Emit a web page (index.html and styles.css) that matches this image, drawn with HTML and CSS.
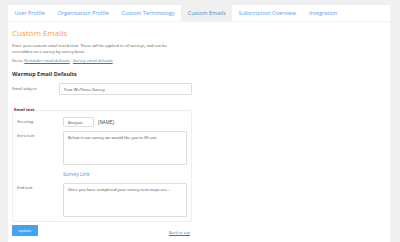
FILE: index.html
```html
<!DOCTYPE html>
<html lang="en">
<head>
  <meta charset="UTF-8">
  <title>Custom Emails</title>
  <link rel="stylesheet" href="styles.css">
</head>
<body>

<div class="panel">
  <ul class="tabs">
    <li><a href="#">User Profile</a></li>
    <li><a href="#">Organisation Profile</a></li>
    <li><a href="#">Custom Terminology</a></li>
    <li class="active"><a href="#">Custom Emails</a></li>
    <li><a href="#">Subscription Overview</a></li>
    <li><a href="#">Integration</a></li>
  </ul>

  <div class="content">
    <h1>Custom Emails</h1>
    <p class="intro">Enter your custom email text below. These will be applied to all surveys, and can be overridden on a survey by survey basis.</p>
    <p class="goto">Go to: <a href="#">Reminder email defaults</a> <a href="#">Survey email defaults</a></p>

    <h2>Warmup Email Defaults</h2>

    <div class="field">
      <label>Email subject</label>
      <input type="text" class="subject" value="Your WeThrive Survey">
    </div>

    <fieldset>
      <legend>Email text</legend>
      <div class="field">
        <label>Greeting</label>
        <input type="text" class="greet" value="Bonjour">
        <span class="name">[NAME],</span>
      </div>
      <div class="field">
        <label>Intro text</label>
        <textarea>Below is our survey we would like you to fill out:</textarea>
      </div>
      <div class="field link-row">
        <label></label>
        <a href="#" class="survey-link">Survey Link</a>
      </div>
      <div class="field">
        <label>End text</label>
        <textarea>Once you have completed your survey next steps are...</textarea>
      </div>
    </fieldset>

    <div class="actions">
      <button>update</button>
      <a href="#">Back to top</a>
    </div>
  </div>
</div>

</body>
</html>
```

FILE: styles.css
```css
body {
  margin: 0;
  padding: 5px 10px 0 8px;
  background-color: #f0f0f0;
  font-family: 'Open Sans', sans-serif;
  color: #444;
}
.panel {
  background-color: #fff;
  height: 237px;
}
.tabs {
  display: flex;
  margin: 0;
  padding: 0;
  list-style: none;
  border-bottom: 1px solid #f2f2f2;
}
.tabs li a {
  display: block;
  padding: 0 6.5px;
  line-height: 16px;
  font-size: 5.5px;
  color: #5aa0e8;
  text-decoration: none;
}
.tabs li.active a {
  background-color: #f0f0f0;
  color: #4a88c8;
}
.content {
  padding: 0 4px;
  width: 180px;
}
h1 {
  margin: 4px 0 0;
  font-size: 8px;
  font-weight: 400;
  line-height: 14px;
  color: #f5a04c;
}
.intro {
  margin: 3px 0 0;
  max-width: 164px;
  font-size: 4px;
  line-height: 6px;
  color: #555;
}
.goto {
  margin: 3px 0 0;
  font-size: 4px;
  line-height: 6px;
  color: #555;
}
.goto a {
  color: #2f80a8;
  margin-right: 2px;
}
h2 {
  margin: 6px 0 0;
  font-size: 5.5px;
  font-weight: 700;
  line-height: 8px;
  color: #333;
}
.field {
  display: flex;
  align-items: flex-start;
  margin-top: 5px;
}
.field label {
  width: 47px;
  flex: none;
  font-size: 4px;
  line-height: 12px;
  color: #555;
}
input, textarea {
  box-sizing: border-box;
  border: 1px solid #ddd;
  border-radius: 1px;
  font-family: 'Open Sans', sans-serif;
  font-size: 4px;
  color: #444;
  padding: 0 4px;
  margin: 0;
}
input.subject {
  width: 133px;
  height: 12px;
}
fieldset {
  margin: 12px 0 0;
  padding: 0 4px 4px;
  border: 1px solid #eee;
  border-radius: 1px;
}
legend {
  padding: 0 1px;
  margin-left: -4px;
  font-size: 4px;
  font-weight: 700;
  line-height: 6px;
  color: #333;
}
fieldset .field {
  margin-top: 4px;
}
fieldset .field label {
  width: 46px;
  line-height: 10px;
}
input.greet {
  width: 31px;
  height: 10px;
}
.name {
  margin-left: 4px;
  font-size: 4.5px;
  line-height: 10px;
}
textarea {
  width: 124px;
  height: 34px;
  padding: 3px 4px;
  resize: none;
  line-height: 5px;
}
fieldset .link-row {
  margin-top: 4px;
}
.survey-link {
  font-size: 5px;
  line-height: 10px;
  color: #4a90e2;
  text-decoration: none;
}
.actions {
  display: flex;
  justify-content: space-between;
  align-items: flex-end;
  margin-top: 3px;
}
button {
  width: 26px;
  height: 11px;
  padding: 0;
  border: none;
  border-radius: 1px;
  background-color: #45a2f0;
  color: #fff;
  font-family: 'Open Sans', sans-serif;
  font-size: 4px;
}
.actions a {
  font-size: 4px;
  line-height: 6px;
  color: #2f80a8;
  margin-right: 2px;
}
```
